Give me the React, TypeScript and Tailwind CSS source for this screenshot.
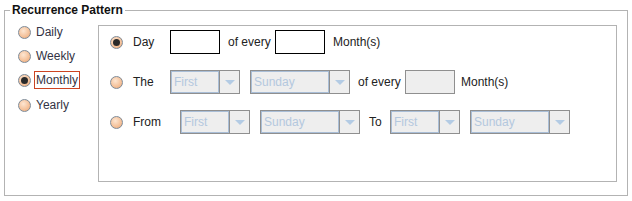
import React from 'react';

const font = "font-['Liberation_Sans',Arial,sans-serif]";

const Radio: React.FC<{ checked?: boolean }> = ({ checked }) => (
  <span className="flex h-[13px] w-[13px] shrink-0 items-center justify-center rounded-full border border-[#7f8b97] bg-[radial-gradient(circle_at_40%_35%,#fde6d2_0%,#f3bd94_65%,#e3a070_100%)]">
    {checked && <span className="h-[7px] w-[7px] rounded-full bg-[#2a2a2a]" />}
  </span>
);

const Combo: React.FC<{ text: string; fieldClass: string }> = ({ text, fieldClass }) => (
  <div className="flex h-[24px] shrink-0">
    <div className={`${fieldClass} h-full border border-[#8f8f8f]`}>
      <div className="flex h-full items-center border border-[#a9bed7] bg-[#eeeeee] pl-[2px] text-[12px] text-[#b4c8de]">
        {text}
      </div>
    </div>
    <div className="flex h-full w-[20px] items-center justify-center border-y border-r border-[#8f8f8f] bg-[#eeeeee]">
      <svg width="10" height="6" viewBox="0 0 10 6" className="mt-[2px]">
        <path d="M0 0 L10 0 L5 5 Z" fill="#b3cbe4" />
      </svg>
    </div>
  </div>
);

const Label: React.FC<{ children: React.ReactNode; className?: string }> = ({ children, className }) => (
  <span className={`shrink-0 text-[12px] leading-[14px] text-[#222222] ${className ?? ''}`}>{children}</span>
);

export default function App() {
  const left = [
    { label: 'Daily', checked: false },
    { label: 'Weekly', checked: false },
    { label: 'Monthly', checked: true },
    { label: 'Yearly', checked: false },
  ];

  return (
    <div className={`h-[201px] w-[632px] bg-white ${font}`}>
      <fieldset className="ml-[4px] mt-[3px] h-[193px] w-[624px] border border-[#b3b3b3]">
        <legend className="ml-[5px] px-[2px] text-[12px] font-bold leading-[14px] text-[#111111]">
          Recurrence Pattern
        </legend>

        <div className="flex">
          {/* period choice */}
          <div className="flex w-[93px] flex-col pl-[13px] pt-[3px]">
            {left.map((r, i) => (
              <div key={r.label} className={`flex items-center ${i === 3 ? 'h-[25px] pt-[1px]' : 'h-[24px]'}`}>
                <Radio checked={r.checked} />
                {r.checked ? (
                  <span className="ml-[3px] border border-[#cc4422] px-[1px] text-[12px] leading-[16px] text-[#333344]">
                    {r.label}
                  </span>
                ) : (
                  <span className="ml-[5px] text-[12px] leading-[16px] text-[#333344]">{r.label}</span>
                )}
              </div>
            ))}
          </div>

          {/* monthly options */}
          <div className="mt-[8px] h-[157px] w-[519px] border border-[#b3b3b3] pl-[11px] pt-[4px]">
            <div className="flex h-[24px] items-center">
              <Radio checked />
              <Label className="ml-[10px] w-[37px]">Day</Label>
              <div className="h-[24px] w-[50px] shrink-0 border border-black bg-white" />
              <Label className="ml-[8px] w-[47px]">of every</Label>
              <div className="h-[24px] w-[50px] shrink-0 border border-black bg-white" />
              <Label className="ml-[8px]">Month(s)</Label>
            </div>

            <div className="mt-[16px] flex h-[24px] items-center">
              <Radio />
              <Label className="ml-[10px] w-[37px]">The</Label>
              <Combo text="First" fieldClass="w-[50px]" />
              <div className="ml-[10px]">
                <Combo text="Sunday" fieldClass="w-[80px]" />
              </div>
              <Label className="ml-[8px] w-[47px]">of every</Label>
              <div className="h-[24px] w-[50px] shrink-0 border border-[#8f8f8f] bg-[#eeeeee]" />
              <Label className="ml-[6px]">Month(s)</Label>
            </div>

            <div className="mt-[16px] flex h-[24px] items-center">
              <Radio />
              <Label className="ml-[10px] w-[47px]">From</Label>
              <Combo text="First" fieldClass="w-[50px]" />
              <div className="ml-[10px]">
                <Combo text="Sunday" fieldClass="w-[80px]" />
              </div>
              <Label className="ml-[9px] w-[21px]">To</Label>
              <Combo text="First" fieldClass="w-[50px]" />
              <div className="ml-[10px]">
                <Combo text="Sunday" fieldClass="w-[80px]" />
              </div>
            </div>
          </div>
        </div>
      </fieldset>
    </div>
  );
}
